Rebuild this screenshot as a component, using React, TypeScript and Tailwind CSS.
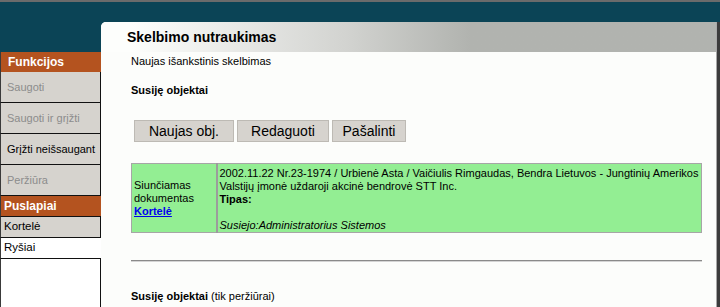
import React from "react";

const font = { fontFamily: '"Liberation Sans", Arial, sans-serif' };

interface NavItem {
  label: string;
  disabled?: boolean;
}

const functions: NavItem[] = [
  { label: "Saugoti", disabled: true },
  { label: "Saugoti ir grįžti", disabled: true },
  { label: "Grįžti neišsaugant" },
  { label: "Peržiūra", disabled: true },
];

const Sidebar: React.FC = () => (
  <aside className="w-[101px] shrink-0 flex flex-col pt-[50px]">
    <div className="h-[20px] bg-[#b4531f] text-white font-bold text-[12px] pl-[7px] flex items-center border-l border-[#3a3a3a]">
      Funkcijos
    </div>
    {functions.map((f) => (
      <div
        key={f.label}
        className={`h-[31px] shrink-0 bg-[#d6d3ce] border-l border-[#3a3a3a] border-r border-r-[#111] border-b border-b-[#111] last:border-b-0 pl-[6px] flex items-center whitespace-nowrap text-[11px] ${
          f.disabled ? "text-[#8c8c8c]" : "text-black"
        }`}
      >
        {f.label}
      </div>
    ))}
    <div className="h-[20px] bg-[#b4531f] text-white font-bold text-[12px] pl-[3px] flex items-center border-l border-[#3a3a3a]">
      Puslapiai
    </div>
    <div className="h-[22px] bg-[#d6d3ce] border-t border-[#111] border-l border-l-[#3a3a3a] border-r border-r-[#111] border-b border-b-[#111] pl-[3px] flex items-center text-[11.5px]">
      Kortelė
    </div>
    <div className="h-[21px] bg-white border-l border-[#3a3a3a] border-b border-b-[#111] pl-[3px] flex items-center text-[11.5px]">
      Ryšiai
    </div>
    <div className="flex-1 bg-white border-l border-[#3a3a3a] border-r border-r-[#111]" />
  </aside>
);

const Button: React.FC<{ label: string; w: string }> = ({ label, w }) => (
  <button
    className={`${w} h-[22px] bg-[#d6d3ce] border border-[#bdbab4] text-[14px] text-black flex items-center justify-center`}
  >
    {label}
  </button>
);

export default function App() {
  return (
    <div
      className="w-[720px] h-[307px] overflow-hidden bg-[#0b4456] border-t-2 border-[#6b6b6b] flex"
      style={font}
    >
      <Sidebar />
      <main className="flex-1 mt-[20px] flex flex-col">
        <div className="flex flex-1">
          <div className="flex-1 bg-[#fcfdfb] rounded-tl-[5px] flex flex-col overflow-hidden">
            <div className="h-[30px] shrink-0 pl-[26px] flex items-center text-[14px] font-bold text-black bg-gradient-to-r from-[#fdfefc] from-5% via-[#d2d3d0] via-40% to-[#b1b3af] to-60%">
              Skelbimo nutraukimas
            </div>
            <div className="pl-[30px] pr-[14px] text-[11px] text-black">
              <p className="mt-[3px] leading-[13px]">Naujas išankstinis skelbimas</p>
              <p className="mt-[16px] font-bold leading-[13px]">Susiję objektai</p>
              <div className="mt-[23px] ml-[3px] flex gap-[3px]">
                <Button label="Naujas obj." w="w-[100px]" />
                <Button label="Redaguoti" w="w-[92px]" />
                <Button label="Pašalinti" w="w-[74px]" />
              </div>
              <table className="mt-[21px] w-full border-collapse bg-[#93ee93] border border-[#a6a6a6]">
                <tbody>
                  <tr>
                    <td className="w-[85px] h-[69px] align-middle px-[2px] leading-[13px] border-r-2 border-[#9c9c9c]">
                      Siunčiamas
                      <br />
                      dokumentas
                      <br />
                      <a className="text-[#0000ee] font-bold underline">Kortelė</a>
                    </td>
                    <td className="align-top px-[2px] pt-[3px] leading-[13px]">
                      2002.11.22 Nr.23-1974 / Urbienė Asta / Vaičiulis Rimgaudas, Bendra Lietuvos - Jungtinių Amerikos
                      Valstijų įmonė uždaroji akcinė bendrovė STT Inc.
                      <br />
                      <b>Tipas:</b>
                      <br />
                      <br />
                      <i>Susiejo:Administratorius Sistemos</i>
                    </td>
                  </tr>
                </tbody>
              </table>
              <hr className="mt-[27px] border-t border-t-[#8a8a8a] border-b border-b-[#d4d4d4]" />
              <p className="mt-[28px] leading-[13px]">
                <b>Susiję objektai</b> (tik peržiūrai)
              </p>
            </div>
          </div>
          <div className="w-[4px] bg-[#3c3c3c] border-l border-[#a8a8a8]" />
        </div>
      </main>
    </div>
  );
}
